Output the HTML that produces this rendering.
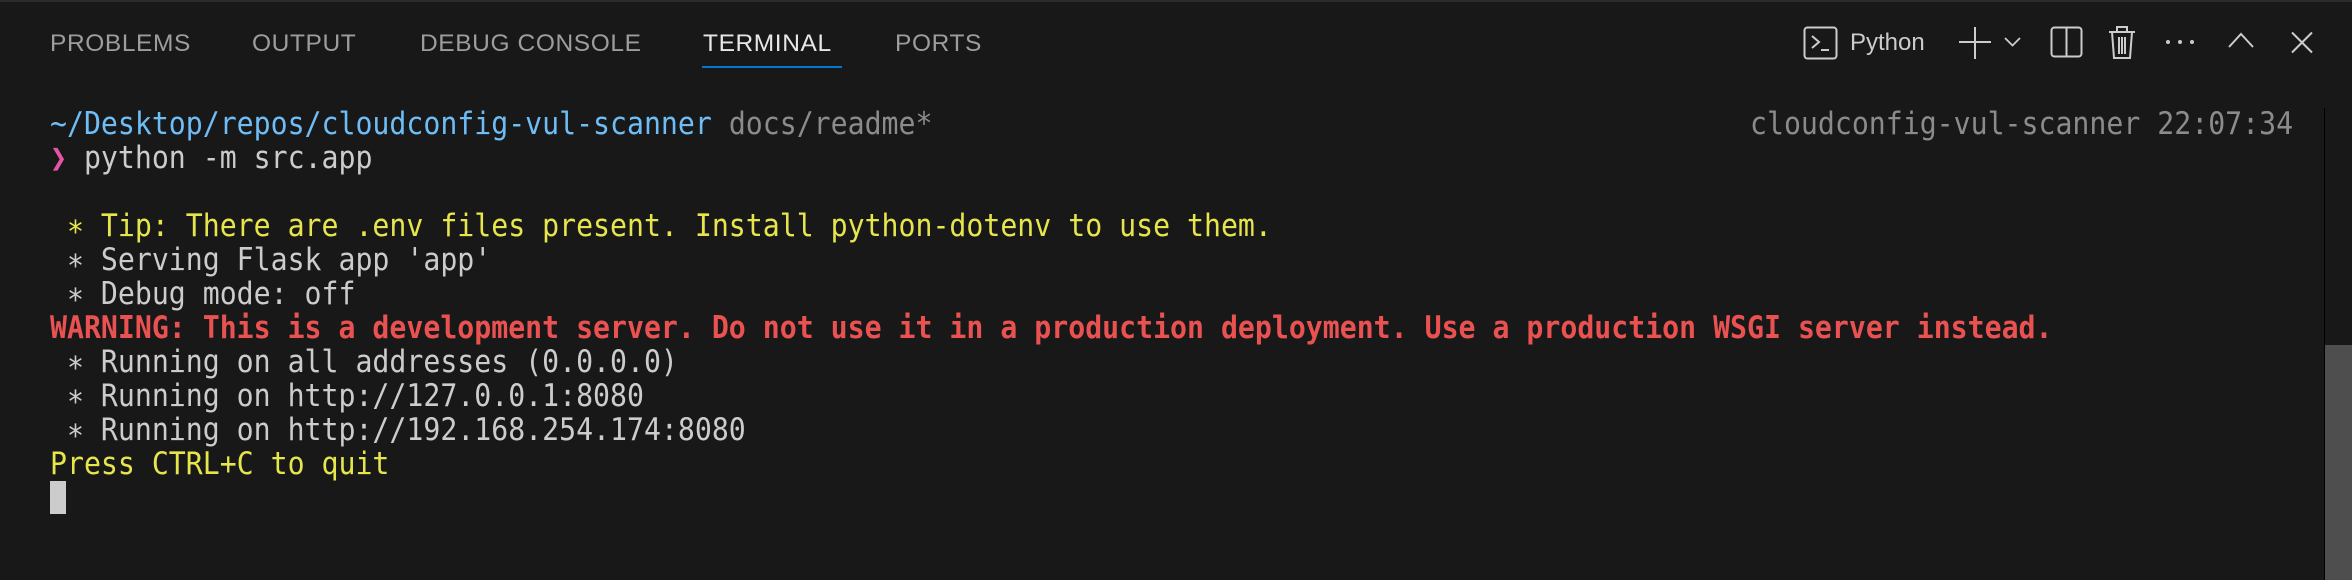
<!DOCTYPE html>
<html><head><meta charset="utf-8"><style>
html,body{margin:0;padding:0;width:2352px;height:580px;overflow:hidden;background:#181818;}
body{position:relative;font-family:"Liberation Sans",sans-serif;}
.topline{position:absolute;left:0;top:0;width:2352px;height:2px;background:#2b2b2b;}
.tab{position:absolute;top:30px;font-size:24.5px;color:#9d9d9d;line-height:28px;white-space:nowrap;letter-spacing:0.6px;}
.ul{position:absolute;left:702px;top:66px;width:140px;height:2px;background:#0078d4;}
.term{position:absolute;left:50px;top:107px;font-family:"DejaVu Sans Mono","Liberation Mono",monospace;font-size:28.2px;line-height:34px;color:#cccccc;}
.term div{height:34px;white-space:pre;transform:scaleY(1.1);}
.b{color:#6fbdf7}.g{color:#8b8b8b}.p{color:#e455a6}.y{color:#e6e54c}.r{color:#ea5252;font-weight:bold}
.right{position:absolute;left:1750px;top:107px;font-family:"DejaVu Sans Mono","Liberation Mono",monospace;font-size:28.2px;line-height:34px;color:#8b8b8b;white-space:pre;transform:scaleY(1.1);}
.cursor{position:absolute;left:50px;top:481px;width:16px;height:33px;background:#cccccc;}
.sbline{position:absolute;left:2324px;top:108px;width:1px;height:472px;background:#000;}
.slider{position:absolute;left:2325px;top:345px;width:27px;height:235px;background:#4e4e4e;}
svg{position:absolute;}
</style></head><body>
<div class="topline"></div>
<div class="tab" style="left:50px">PROBLEMS</div>
<div class="tab" style="left:252px">OUTPUT</div>
<div class="tab" style="left:420px">DEBUG CONSOLE</div>
<div class="tab" style="left:703px;color:#e7e7e7">TERMINAL</div>
<div class="tab" style="left:895px">PORTS</div>
<div class="ul"></div>

<svg style="left:1803px;top:26px" width="36" height="34" viewBox="0 0 36 34" fill="none" stroke="#cccccc" stroke-width="2"><rect x="1.5" y="1.5" width="32" height="31" rx="3"/><path d="M9 10l7 6-7 6M18 24h8"/></svg>
<div style="position:absolute;left:1850px;top:28px;font-size:24px;color:#cccccc;line-height:30px;">Python</div>
<svg style="left:1958px;top:26px" width="34" height="34" viewBox="0 0 34 34" stroke="#cccccc" stroke-width="2"><path d="M17 1v32M1 16h32"/></svg>
<svg style="left:2003px;top:36px" width="19" height="12" viewBox="0 0 19 12" fill="none" stroke="#cccccc" stroke-width="1.8"><path d="M2 2l7.5 7.5L17 2"/></svg>
<svg style="left:2050px;top:26px" width="34" height="33" viewBox="0 0 34 33" fill="none" stroke="#cccccc" stroke-width="2"><rect x="1.5" y="1.5" width="30" height="29" rx="3"/><path d="M16.5 1.5v29"/></svg>
<svg style="left:2108px;top:25px" width="28" height="35" viewBox="0 0 28 35" fill="none" stroke="#cccccc" stroke-width="2"><path d="M1 7h26M9 7V2h10v5M4 7l2 26h16l2-26M11 12v17M14 12v17M17 12v17"/></svg>
<svg style="left:2164px;top:38px" width="32" height="8" viewBox="0 0 32 8" fill="#cccccc"><circle cx="4" cy="4" r="2"/><circle cx="16" cy="4" r="2"/><circle cx="28" cy="4" r="2"/></svg>
<svg style="left:2227px;top:31px" width="28" height="18" viewBox="0 0 28 18" fill="none" stroke="#cccccc" stroke-width="2"><path d="M2 16L14 3l12 13"/></svg>
<svg style="left:2290px;top:31px" width="24" height="23" viewBox="0 0 24 23" fill="none" stroke="#cccccc" stroke-width="2"><path d="M2 1.5l20 20M22 1.5l-20 20"/></svg>

<div class="term"><div><span class="b">~/Desktop/repos/cloudconfig-vul-scanner</span> <span class="g">docs/readme*</span></div><div><span class="p">❯</span> python -m src.app</div><div> </div><div class="y"> ∗ Tip: There are .env files present. Install python-dotenv to use them.</div><div> ∗ Serving Flask app 'app'</div><div> ∗ Debug mode: off</div><div class="r">WARNING: This is a development server. Do not use it in a production deployment. Use a production WSGI server instead.</div><div> ∗ Running on all addresses (0.0.0.0)</div><div> ∗ Running on http://127.0.0.1:8080</div><div> ∗ Running on http://192.168.254.174:8080</div><div class="y">Press CTRL+C to quit</div></div>
<div class="right">cloudconfig-vul-scanner 22:07:34</div>
<div class="cursor"></div>
<div class="sbline"></div>
<div class="slider"></div>
</body></html>
